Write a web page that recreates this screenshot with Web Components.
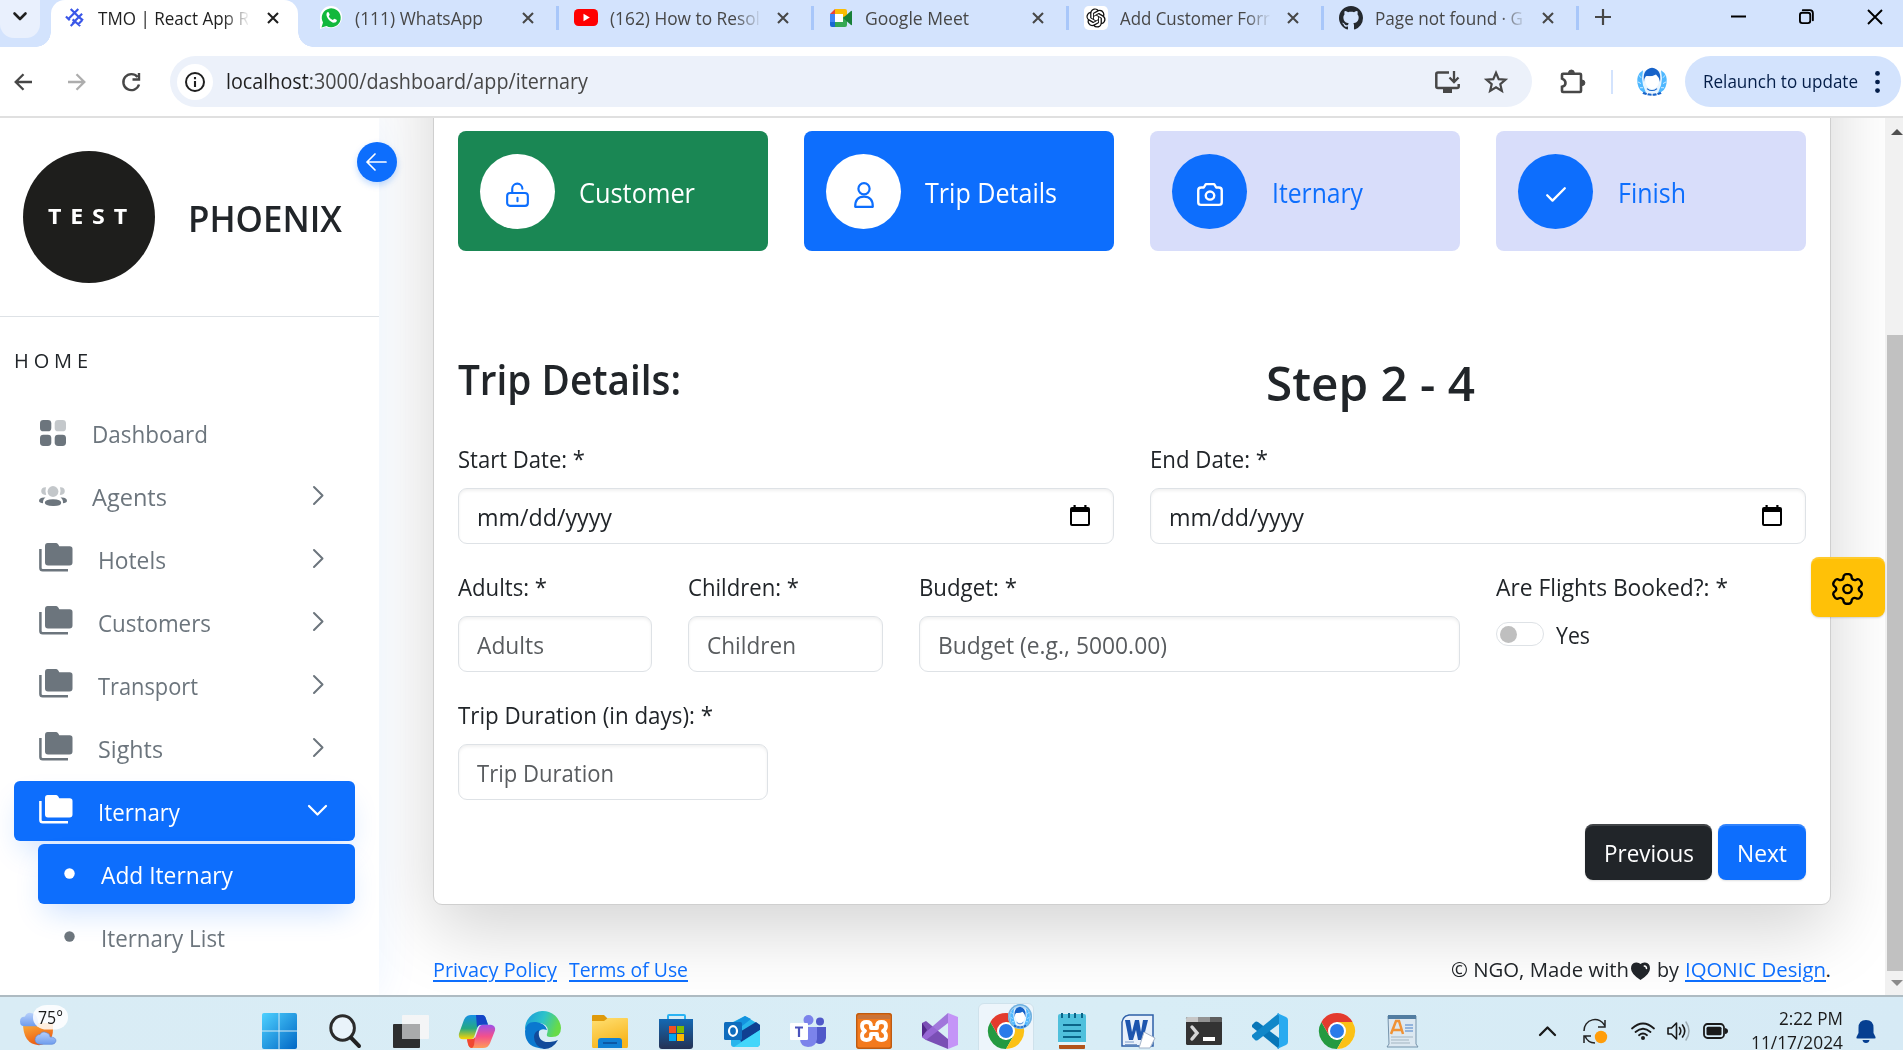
<!DOCTYPE html>
<html lang="en">
<head>
<meta charset="utf-8">
<title>TMO | React App</title>
<style>
html,body{margin:0;padding:0;width:1903px;height:1050px;overflow:hidden;background:#fff}
body{font-family:"Open Sans","Noto Sans",sans-serif;color:#212529}
</style>
</head>
<body>
<desktop-screen></desktop-screen>
<script>
const define=(name,html,after)=>customElements.define(name,class extends HTMLElement{
  connectedCallback(){
    if(this.shadowRoot)return;
    const t=document.createElement('template');
    t.innerHTML=typeof html==='function'?html(this):html;
    this.attachShadow({mode:'open'}).append(t.content.cloneNode(true));
    if(after)after(this,this.shadowRoot);
  }
});

/* Text run that is condensed or stretched to the width given in "w". */
define('fit-text',`<style>:host{display:block;white-space:pre;flex:none}span{display:inline-block;transform-origin:0 50%;white-space:pre}</style><span><slot></slot></span>`,(el,r)=>{
  const w=+el.getAttribute('w');if(!w)return;
  const s=r.querySelector('span');const n=s.getBoundingClientRect().width;
  el.style.width=w+'px';
  if(n)s.style.transform=`scaleX(${w/n})`;
});

const chromeLogo=`<circle cx="18" cy="18" r="18" fill="#fff"/><path d="M2.400 9 10.200 22.500 18 27l7.800-4.500L18 36A18 18 0 0 1 2.400 9z" fill="#249a41"/><path d="M25.800 22.500 18 36A18 18 0 0 0 33.600 9H18z" fill="#fbc116"/><path d="M18 9h15.600A18 18 0 0 0 2.400 9l7.800 13.500z" fill="#e33b2e"/><circle cx="18" cy="18" r="9" fill="#fff"/><circle cx="18" cy="18" r="7" fill="#2a7bea"/>`;
const face=`<circle cx="15" cy="17" r="14.500" fill="#e9f6ff"/><path d="M6 4Q-1 9 .5 20T9 31L6 22 5 14zM24 4q7 5 5.500 16T21 31l3-9 1-8z" fill="#4fb8ff"/><path d="M7 18Q5 3 15 1q10 2 8 17-1-6-4-9-5 3-10 2-2 3-2 7z" fill="#1763c9"/><path d="M8 14q1-2 2-3 6 1 9-1 3 3 3 6 0 9-7 11-7-2-7-13z" fill="#fff"/><path d="M10 26q5 5 10 0" stroke="#1763c9" stroke-width="1.200" fill="none"/><path d="M6 31q9 5 18 0" stroke="#1763c9" stroke-width="2.600" stroke-dasharray="4 1" fill="none"/><path d="M2 10l2 3M1 18l3 2M3 25l3 0M28 10l-2 3M29 18l-3 2M27 25h-3" stroke="#fff" stroke-width=".8"/>`;
const S='fill="none" stroke="currentColor" stroke-linecap="round" stroke-linejoin="round"';
const icons={
 down:['0 0 14 9',`<path d="M1.500 1.500 7 7l5.500-5.500" ${S} stroke-width="2.600" stroke-linecap="square"/>`],
 x:['0 0 12 12',`<path d="M1 1l10 10M11 1 1 11" fill="none" stroke="currentColor" stroke-width="2.100"/>`],
 plus:['0 0 16 16',`<path d="M8 0v16M0 8h16" stroke="currentColor" stroke-width="2.200"/>`],
 min:['0 0 15 15',`<path d="M0 7.500h15" stroke="#000" stroke-width="2"/>`],
 restore:['0 0 16 16',`<rect x="1" y="4" width="11" height="11" rx="2.500" ${S} stroke-width="2"/><path d="M4 1.200h7.500q3.300 0 3.300 3.300V12" ${S} stroke-width="2"/>`],
 close:['0 0 16 16',`<path d="M1 1l14 14M15 1 1 15" stroke="#000" stroke-width="1.900"/>`],
 tmo:['0 0 20 20',`<g stroke="#3a57e8" stroke-width="2.300" fill="none"><path d="M6 1l8 8M14 1 3 12M8 12l8 7M18 6 8 16M1 9l4 4M14 9l5 4M6 19l4-4M14 17l4-4"/></g>`],
 wa:['0 0 22 22',`<path d="M0 22V10A11 11 0 1 1 11 21Q8 21 5.500 20z" fill="#fff"/><path d="M1.500 20.500 3 15.500A9.500 9.500 0 1 1 6.500 19z" fill="#12b83c"/><path d="M7 5.500c1-1 1.500-.7 2 .5l.7 1.500c.2.600-.9 1.500-.9 1.800.6 1.600 2.300 3 4 3.600.5 0 1.200-1.300 1.700-1.200l2 1c1 .5-.1 2.700-1.800 2.900C11 16.500 4.500 9.500 7 5.500z" fill="#fff"/>`],
 yt:['0 0 24 17',`<rect width="24" height="17" rx="4.500" fill="#f00"/><path d="M9.500 4.800v7.400l6.300-3.700z" fill="#fff"/>`],
 meet:['0 0 22 18',`<path d="M0 5 5 0v5z" fill="#ea4335"/><path d="M5 0h10q2 0 2 2v6l-4 3V5H5z" fill="#fbbc04"/><path d="M0 5h5v8H0z" fill="#4285f4"/><path d="M0 13h5v5H2q-2 0-2-2z" fill="#1967d2"/><path d="M5 13h8V8l4-1v9q0 2-2 2H5z" fill="#34a853"/><path d="m13 9 8-7q1-.5 1 .5v13q0 1-1 .5z" fill="#188038"/><path d="M5 5h8v8H5z" fill="#fff"/>`],
 gpt:['-3 -3 30 30',`<rect x="-3" y="-3" width="30" height="30" rx="6" fill="#fff"/><path d="M22.2819 9.8211a5.9847 5.9847 0 0 0-.5157-4.9108 6.0462 6.0462 0 0 0-6.5098-2.9A6.0651 6.0651 0 0 0 4.9807 4.1818a5.9847 5.9847 0 0 0-3.9977 2.9 6.0462 6.0462 0 0 0 .7427 7.0966 5.98 5.98 0 0 0 .511 4.9107 6.051 6.051 0 0 0 6.5146 2.9001A5.9847 5.9847 0 0 0 13.2599 24a6.0557 6.0557 0 0 0 5.7718-4.2058 5.9894 5.9894 0 0 0 3.9977-2.9001 6.0557 6.0557 0 0 0-.7475-7.0729zm-9.022 12.6081a4.4755 4.4755 0 0 1-2.8764-1.0408l.1419-.0804 4.7783-2.7582a.7948.7948 0 0 0 .3927-.6813v-6.7369l2.02 1.1686a.071.071 0 0 1 .038.052v5.5826a4.504 4.504 0 0 1-4.4945 4.4944zm-9.6607-4.1254a4.4708 4.4708 0 0 1-.5346-3.0137l.142.0852 4.783 2.7582a.7712.7712 0 0 0 .7806 0l5.8428-3.3685v2.3324a.0804.0804 0 0 1-.0332.0615L9.74 19.9502a4.4992 4.4992 0 0 1-6.1408-1.6464zM2.3408 7.8956a4.485 4.485 0 0 1 2.3655-1.9728V11.6a.7664.7664 0 0 0 .3879.6765l5.8144 3.3543-2.0201 1.1685a.0757.0757 0 0 1-.071 0l-4.8303-2.7865A4.504 4.504 0 0 1 2.3408 7.872zm16.5963 3.8558L13.1038 8.364 15.1192 7.2a.0757.0757 0 0 1 .071 0l4.8303 2.7913a4.4944 4.4944 0 0 1-.6765 8.1042v-5.6772a.79.79 0 0 0-.407-.667zm2.0107-3.0231l-.142-.0852-4.7735-2.7818a.7759.7759 0 0 0-.7854 0L9.409 9.2297V6.8974a.0662.0662 0 0 1 .0284-.0615l4.8303-2.7866a4.4992 4.4992 0 0 1 6.6802 4.66zM8.3065 12.863l-2.02-1.1638a.0804.0804 0 0 1-.038-.0567V6.0742a4.4992 4.4992 0 0 1 7.3757-3.4537l-.142.0805L8.704 5.459a.7948.7948 0 0 0-.3927.6813zm1.0976-2.3654l2.602-1.4998 2.6069 1.4998v2.9994l-2.5974 1.4997-2.6067-1.4997Z" fill="#111"/>`],
 gh:['0 0 16 16',`<path fill="#24292f" d="M8 0C3.580 0 0 3.580 0 8c0 3.540 2.290 6.530 5.470 7.590.4.070.55-.17.55-.38 0-.19-.01-.82-.01-1.490-2.010.37-2.530-.49-2.690-.94-.09-.23-.48-.94-.82-1.130-.28-.15-.68-.52-.01-.53.63-.01 1.080.58 1.230.82.72 1.210 1.870.87 2.330.66.07-.52.28-.87.51-1.070-1.780-.2-3.640-.89-3.640-3.950 0-.87.31-1.590.82-2.150-.08-.2-.36-1.020.08-2.120 0 0 .67-.21 2.200.82.64-.18 1.320-.27 2-.27s1.360.09 2 .27c1.530-1.040 2.200-.82 2.200-.82.44 1.100.16 1.920.08 2.120.51.56.82 1.270.82 2.150 0 3.070-1.870 3.750-3.650 3.950.29.25.54.73.54 1.480 0 1.070-.01 1.930-.01 2.200 0 .21.15.46.55.38A8.013 8.013 0 0 0 16 8c0-4.420-3.580-8-8-8z"/>`],
 back:['0 0 18 18',`<path d="M9.500 1.200 1.700 9l7.800 7.800M2 9h16" fill="none" stroke="currentColor" stroke-width="2.300"/>`],
 fwd:['0 0 18 18',`<path d="m8.500 1.200 7.800 7.800-7.800 7.800M16 9H0" fill="none" stroke="currentColor" stroke-width="2.300"/>`],
 reload:['0 0 20 20',`<path d="M16.500 5A8 8 0 1 0 18 12.500M18 1v6.500h-6.500" fill="none" stroke="currentColor" stroke-width="2.400"/>`],
 info:['0 0 20 20',`<circle cx="10" cy="10" r="9" fill="none" stroke="currentColor" stroke-width="2"/><path d="M10 9v6M10 5v2.200" stroke="currentColor" stroke-width="2.100"/>`],
 install:['0 0 25 22',`<path d="M14 1.500H3Q1.300 1.500 1.300 3v12.500Q1.300 17 3 17h19q1.700 0 1.700-1.500V13" fill="none" stroke="currentColor" stroke-width="2.500"/><path d="M8 17h9v5H8z" fill="currentColor"/><path d="M19 0v10M14.500 6.500 19 11l4.500-4.500" fill="none" stroke="currentColor" stroke-width="2.300"/>`],
 star:['0 0 24 24',`<path d="m12 2.800 2.700 6.300 6.800.6-5.200 4.500 1.600 6.700L12 17.300l-5.900 3.600 1.600-6.700-5.200-4.500 6.800-.6z" fill="none" stroke="currentColor" stroke-width="2.200"/>`],
 ext:['0 0 25 27',`<path d="M3 6h17q1 0 1 1v17q0 1-1 1H3q-1 0-1-1v-4.500q3.500-1 3.500-4T2 11V7q0-1 1-1z" fill="none" stroke="currentColor" stroke-width="2.600"/><path d="M8.500 5a2.900 2.900 0 0 1 5.800 0zM22 12.500a2.900 2.900 0 0 1 0 5.800z" fill="currentColor" stroke="currentColor"/>`],
 face:['0 0 30 35',face],
 dots:['0 0 5 23',`<circle cx="2.500" cy="2.500" r="2.400"/><circle cx="2.500" cy="11.500" r="2.400"/><circle cx="2.500" cy="20.500" r="2.400"/>`],
 arrow:['0 0 22 18',`<path d="M10 1 2 9l8 8M2 9h19" ${S} stroke-width="1.700"/>`],
 dash:['0 0 26 26',`<rect width="11.300" height="11.300" rx="3.400"/><rect x="14.700" width="11.300" height="11.300" rx="3.400" opacity=".4"/><rect y="14.700" width="11.300" height="11.300" rx="3.400"/><rect x="14.700" y="14.700" width="11.300" height="11.300" rx="3.400"/>`],
 people:['0 0 28 20',`<g opacity=".4"><circle cx="14" cy="5.500" r="5.400"/><path d="M7 1.200Q2.200 1 2.200 5.200 2.500 9 7.200 9 5.800 5 7 1.200zM21 1.200q4.800-.2 4.800 4Q25.500 9 20.800 9q1.400-4 .2-7.800z"/></g><path d="M14 13.200q8.200 0 8.200 3.500T14 20t-8.200-3.300 8.200-3.500zM6.500 11.500Q0 11 0 15q.5 2 4 2.200-.2-4 2.500-5.700zM21.500 11.500Q28 11 28 15q-.5 2-4 2.200.2-4-2.500-5.700z"/>`],
 folder:['0 0 34 29',`<path d="M8.700 0h8.600q1.200 0 2 1.500l1 1.700h10.400Q33.500 3.200 33.500 6v13.500q0 3-3 3H9q-3 0-3-3V3q0-3 2.700-3z"/><path d="M1.400 6v19q0 2.300 2.300 2.300H29" fill="none" stroke="currentColor" stroke-width="2.500"/>`],
 right:['0 0 11 19',`<path d="m1 1 8.500 8.500L1 18" ${S} stroke-width="2"/>`],
 downW:['0 0 19 11',`<path d="m1 1 8.500 8.500L18 1" ${S} stroke-width="2.200"/>`],
 dot:['0 0 11 11',`<circle cx="5.500" cy="5.500" r="5.200"/>`],
 lock:['0 0 24 26',`<rect x="1.200" y="11.500" width="21.600" height="13.300" rx="3" ${S} stroke-width="2.200"/><path d="M6.500 11.500V7a5.300 5.300 0 0 1 10.600 0M12 16.500v3.500" ${S} stroke-width="2.200"/>`],
 user:['0 0 20 26',`<circle cx="10" cy="6.800" r="5.600" ${S} stroke-width="2.200"/><path d="M1.200 24.800Q1 14.700 10 14.700t8.800 10.100z" ${S} stroke-width="2.200"/>`],
 cam:['0 0 25 23',`<path d="M8.500 1.200h8l2 3.300H21q2.800 0 2.800 2.800v11.900q0 2.700-2.800 2.700H4q-2.800 0-2.800-2.700V7.300Q1.200 4.500 4 4.500h2.500z" ${S} stroke-width="2.300"/><circle cx="12.500" cy="12.600" r="4.100" ${S} stroke-width="2.300"/>`],
 check:['0 0 20 15',`<path d="m1.200 8.300 5.300 5.300L18.800 1.200" ${S} stroke-width="2.300"/>`],
 cal:['0 0 20 21',`<path d="M3.500 0h2.200v2h8.600V0h2.200v2H18q2 0 2 2v15q0 2-2 2H2q-2 0-2-2V4q0-2 2-2h1.500zM2 7v12h16V7z" fill="#000" fill-rule="evenodd"/>`],
 gear:['2.500 1.500 19.300 20.800',`<path d="M20.8064 7.62361L20.184 6.54352C19.6574 5.6296 18.4905 5.31432 17.5753 5.83872C17.1397 6.09534 16.6198 6.16815 16.1305 6.04109C15.6411 5.91402 15.2224 5.59752 14.9666 5.16137C14.8021 4.88415 14.7137 4.56839 14.7103 4.24604C14.7251 3.72922 14.5302 3.2284 14.1698 2.85767C13.8094 2.48694 13.3143 2.27786 12.7973 2.27808H11.5433C11.0367 2.27807 10.5511 2.47991 10.1938 2.83895C9.83644 3.19798 9.63693 3.68459 9.63937 4.19112C9.62435 5.23693 8.77224 6.07681 7.72632 6.0767C7.40397 6.07336 7.08821 5.98494 6.81099 5.82041C5.89582 5.29601 4.72887 5.61129 4.20229 6.52522L3.5341 7.62361C3.00817 8.53639 3.31916 9.70261 4.22975 10.2323C4.82166 10.574 5.18629 11.2056 5.18629 11.8891C5.18629 12.5725 4.82166 13.2041 4.22975 13.5458C3.32031 14.0719 3.00898 15.2353 3.5341 16.1454L4.16568 17.2346C4.4124 17.6798 4.82636 18.0083 5.31595 18.1474C5.80554 18.2866 6.3304 18.2249 6.77438 17.976C7.21084 17.7213 7.73094 17.6516 8.2191 17.7822C8.70725 17.9128 9.12299 18.233 9.37392 18.6717C9.53845 18.9489 9.62686 19.2646 9.63021 19.587C9.63021 20.6435 10.4867 21.5 11.5433 21.5H12.7973C13.8502 21.5001 14.7053 20.6491 14.7103 19.5962C14.7079 19.088 14.9086 18.6 15.2679 18.2407C15.6272 17.8814 16.1152 17.6807 16.6233 17.6831C16.9449 17.6917 17.2594 17.7798 17.5387 17.9394C18.4515 18.4653 19.6177 18.1544 20.1474 17.2438L20.8064 16.1454C21.0615 15.7075 21.1315 15.186 21.001 14.6964C20.8704 14.2067 20.55 13.7894 20.1108 13.5367C19.6715 13.284 19.3511 12.8666 19.2206 12.3769C19.09 11.8873 19.16 11.3658 19.4151 10.928C19.581 10.6383 19.8211 10.3982 20.1108 10.2323C21.0159 9.70289 21.3262 8.54349 20.8064 7.63277V7.62361Z" ${S} stroke-width="1.500"/><circle cx="12.175" cy="11.889" r="2.636" ${S} stroke-width="1.500"/>`],
 heart:['0 0 19 18',`<path d="M9.500 18Q0 12 0 6.500 0 1 5 .5 8 .3 9.500 2 11 .3 14 .5q5 .5 5 6Q19 12 9.500 18z"/><path d="M13.300 4q2.200.2 2.200 2.600" stroke="#fff" stroke-width="1.500" fill="none" stroke-linecap="round"/>`],
 up3:['0 0 12 6',`<path d="M0 6h12L6 0z" fill="#505050"/>`],
 dn3:['0 0 12 6',`<path d="M0 0h12L6 6z" fill="#8a8a8a"/>`],
 weather:['0 0 48 50',`<defs><linearGradient id="a" y2="1" x2=".4"><stop stop-color="#fbb03b"/><stop offset="1" stop-color="#ec5c13"/></linearGradient><linearGradient id="b" y2="1" x2="0"><stop stop-color="#b7d0fb"/><stop offset="1" stop-color="#6e9ced"/></linearGradient></defs><path d="M3 22h30v8q0 17-14 19Q3 48 3 22z" fill="url(#a)"/><path d="M5 26q-5 0-5-6t5-6q2-6 7-4 7 1 6 16z" fill="url(#b)"/><rect x="13" width="35" height="30" rx="14" fill="#fff" opacity=".85"/><path d="M20 48q-5-1-5-6 1-6 5-6 2-5 7-2 3 1 3 5 6 0 6 5-1 4-4 4z" fill="url(#b)" stroke="#6089d8" stroke-width=".7"/>`],
 win:['0 0 36 36',`<defs><linearGradient id="a" x2="1" y2="1"><stop stop-color="#4fd1ff"/><stop offset="1" stop-color="#0067c5"/></linearGradient></defs><path d="M2 0h15v17.500H0V2q0-2 2-2zM18 0h16q2 0 2 2v15.500H18zM0 18.500h17V36H2q-2 0-2-2zM18 18.500h18V34q0 2-2 2H18z" fill="url(#a)"/>`],
 search:['0 0 33 34',`<circle cx="14" cy="14" r="12.200" fill="#e9f3fa" stroke="#2b2b2b" stroke-width="3"/><path d="m22.500 23.500 8.500 8.500" stroke="#222" stroke-width="4" stroke-linecap="round"/>`],
 task:['0 0 36 33',`<rect x="9" width="27" height="24" rx="1" fill="#f4f5f6"/><path d="M0 10q0-1 1-1h25q1 0 1 1v22q0 1-1 1H1q-1 0-1-1z" fill="#2d2e2f"/><path d="M9 9h18v15H9z" fill="#a9aaab"/>`],
 copilot:['0 0 36 34',`<defs><linearGradient id="a" x2="0" y2="1"><stop stop-color="#1691e6"/><stop offset=".55" stop-color="#25a982"/><stop offset="1" stop-color="#ffd500"/></linearGradient><linearGradient id="b" x2="0" y2="1"><stop stop-color="#9c50ea"/><stop offset=".5" stop-color="#f4508b"/><stop offset="1" stop-color="#ff9b58"/></linearGradient></defs><path d="M12 0h11q3 0 4 4l2 6h-7q-3 0-4 4l-3 9q-1 2-4 2H4q-5 0-4-6L5 5q2-5 7-5z" fill="url(#a)"/><path d="M17 0h6q3 0 4 4l2 6h-7q-3 0-4 3z" fill="#1444c7"/><path d="M24 34H13q-3 0-4-4l-1-5h5q3 0 4-4l3-8q1-3 4-3h8q5 1 4 6l-5 13q-2 5-7 5z" fill="url(#b)"/><path d="M13 34q-3 0-4-4l-1-5h4q3 0 4-2l-1 8q-1 3-2 3z" fill="#f0482f"/>`],
 edge:['0 0 36 36',`<defs><linearGradient id="a" x2="1" y2=".3"><stop stop-color="#1a98dd"/><stop offset=".55" stop-color="#2dc3c9"/><stop offset="1" stop-color="#68db47"/></linearGradient></defs><path d="M0 17A18 18 0 0 1 36 15q0 10-11 9-4 0-3-3 3-9-7-11Q3 9 0 17z" fill="url(#a)"/><path d="M0 18Q1 8 11 9q9 1 11 8-9-3-9 6 0 12 9 12-4 1-8 0Q0 33 0 18z" fill="#0a78cf"/><path d="M14 17q-2 13 11 12 5-.5 8-2-5 9-14 9-10-3-10-12 0-5 5-7z" fill="#114a9a"/>`],
 explorer:['0 0 36 33',`<defs><linearGradient id="a" x2=".4" y2="1"><stop stop-color="#ffe073"/><stop offset="1" stop-color="#f8b51d"/></linearGradient></defs><path d="M0 1q0-1 1-1h11l4 4-4 6H0z" fill="#df9a0b"/><path d="M0 6h12l4-3h19q1 0 1 1v27q0 2-1 2H1q-1 0-1-2z" fill="url(#a)"/><path d="M6 33V26q0-3 3-3h18q3 0 3 3v7z" fill="#1180d4"/><path d="M11 28h14" stroke="#0b58a5" stroke-width="2"/>`],
 store:['0 0 34 35',`<defs><linearGradient id="a" x2="0" y2="1"><stop stop-color="#1469b4"/><stop offset="1" stop-color="#253254"/></linearGradient></defs><path d="M9 6V2q0-1 1-1h15q1 0 1 1v4" fill="none" stroke="#2bb3f3" stroke-width="2"/><path d="M0 5h34v27q0 3-3 3H3q-3 0-3-3z" fill="url(#a)"/><path d="M10 12h7v7h-7z" fill="#f25022"/><path d="M18 12h7v7h-7z" fill="#7fba00"/><path d="M10 20h7v7h-7z" fill="#00a4ef"/><path d="M18 20h7v7h-7z" fill="#ffb900"/>`],
 outlook:['0 0 36 31',`<path d="M7 7 21 0l15 9v18q0 4-4 4H10q-3 0-3-3z" fill="#28b5ec"/><path d="M7 8 21 0l6 3L8 18z" fill="#1493df"/><path d="m14 17 18-11 4 3v5L17 26z" fill="#103f91"/><path d="M10 31 36 14v13q0 4-4 4z" fill="#43d6fa"/><rect y="6" width="18" height="18" rx="1.500" fill="#0f6cbd"/><ellipse cx="9" cy="15" rx="4" ry="4.800" fill="none" stroke="#fff" stroke-width="2.200"/>`],
 teams:['0 0 36 33',`<circle cx="30" cy="6.500" r="4" fill="#5059c9"/><circle cx="18.500" cy="5" r="5" fill="#7b83eb"/><path d="M24 12h12v11q-1 6-7 6-5-1-5-7z" fill="#5059c9"/><path d="M10 12h17v12q-1 8-9 8-8-1-8-8z" fill="#7b83eb"/><rect y="8" width="18" height="17" rx="1" fill="#fff"/><path d="M5 12.500h8M9 12.500V22" stroke="#4b53bc" stroke-width="2.200"/>`],
 xampp:['0 0 36 36',`<rect width="36" height="36" rx="3" fill="#f37a1d"/><rect x=".7" y=".7" width="34.600" height="34.600" rx="2.500" fill="none" stroke="#bd5b12" stroke-width="1.400"/><path d="M2 2h32v4H2z" fill="#c9743a"/><path d="M15 15V13q0-4-4.500-4T6 13q0 3.500 3 5-3 1.500-3 5 0 4 4.500 4T15 23v-2h6v2q0 4 4.500 4t4.500-4q0-3.500-3-5 3-1.500 3-5 0-4-4.500-4T21 13v2z" fill="none" stroke="#fff" stroke-width="3.800" stroke-linejoin="round"/>`],
 vs:['0 0 36 36',`<path d="m0 10 4-2 22 18v10L4 27l-4-3z" fill="#7a4fb5"/><path d="M0 24V10l5 7z" fill="#52288a"/><path d="m0 24 4 3L26 10V0L4 19z" fill="#9a69d8" opacity=".9"/><path d="m26 0 10 4v28l-10 4z" fill="#c494f7"/>`],
 chrome:['0 0 36 36',chromeLogo],
 notepad:['0 0 28 36',`<path d="M1 31h26v4q0 1-1 1H2q-1 0-1-1z" fill="#b3541a"/><rect y="1" width="28" height="30" rx="2" fill="#4fc0dc"/><path d="M0 29h28v3H0z" fill="#e6f4f8"/><path d="M4 0v5M11 0v5M17 0v5M24 0v5M5 12h18M5 18h18M5 24h18" stroke="#0b6588" stroke-width="2"/>`],
 word:['0 0 34 34',`<path d="M8 1h24v31H1V8q1-6 7-7z" fill="#e9f1fb" stroke="#2e5fa8" stroke-width="1.500"/><path d="M4 6h5l2 12 3-12h4l2 12 2-12h5l-5 20h-5l-2-10-3 10H8z" fill="#1d55ae"/><path d="m23 18 11 6-5 10H18z" fill="#fff" stroke="#a3b3c9"/><path d="M4 28h9M4 30.500h12" stroke="#7c9cc9"/>`],
 term:['0 0 36 28',`<rect width="36" height="28" rx="1.500" fill="#333"/><path d="M0 5V1.500Q0 0 1.500 0H12v5z" fill="#c7c7c7"/><path d="M12 0h12v5H12z" fill="#939393"/><path d="M24 0h10q2 0 2 2v3H24z" fill="#5d5d5d"/><path d="m6 10 5 6-5 6" fill="none" stroke="#d7d7d7" stroke-width="3.500" stroke-linecap="round"/><path d="M17 22h12" stroke="#fff" stroke-width="4"/>`],
 code:['0 0 36 36',`<path d="m0 12 3-3q1-1 3 0l21 16v11L0 14z" fill="#0876b8"/><path d="m0 24 3 3q1 1 3 0L27 11V0L0 22z" fill="#1187c9"/><path d="m25 0 9 4q2 1 2 3v22q0 2-2 3l-9 4 2-3V3z" fill="#29aaf0"/>`],
 wordpad:['0 0 31 35',`<path d="M1 2h28v28l2 3H0l2-3z" fill="#dce8f1" stroke="#7593ab"/><path d="M1 1h28v4H1z" fill="#527da1"/><path d="m4 20 5-13h3l4 13M6 16h8" fill="none" stroke="#f09235" stroke-width="2.500"/><path d="M18 11h8M18 14h8M18 17h8" stroke="#4a80c7"/><path d="M4 23h22M4 26h18M4 29h19" stroke="#a3b5c1"/>`],
 upc:['0 0 17 10',`<path d="m1 9 7.500-7.500L16 9" ${S} stroke-width="2.300"/>`],
 sync:['0 0 25 25',`<path d="M1 12A11 11 0 0 1 22 7M22 1v7h-7M12 24A11 11 0 0 1 2 17M1 24v-7h7" fill="none" stroke="#222" stroke-width="1.500"/><circle cx="18" cy="18" r="6.200" fill="#ff9d0a"/>`],
 wifi:['0 0 24 18',`<path d="M1 6.500q11-10 22 0M4.500 10q7.500-6.500 15 0M8 13.200q4-3.500 8 0" ${S} stroke-width="1.800"/><circle cx="12" cy="16" r="2"/>`],
 vol:['0 0 24 20',`<path d="M1 7h3.500L9.500 2v16l-5-5H1z" ${S} stroke-width="1.600"/><path d="M12.500 6.500q2.500 3.500 0 7M15.500 4q4.500 6 0 12" ${S} stroke-width="1.600"/><path d="M19 1q6 9 0 18" ${S} stroke-width="1.500" opacity=".3"/>`],
 batt:['0 0 25 16',`<rect x="1" y="1" width="20" height="14" rx="3.500" ${S} stroke-width="1.800"/><rect x="3.500" y="3.700" width="15" height="8.600" rx="1.500"/><path d="M22 5q3 .5 3 3t-3 3z"/>`],
 bell:['0 0 20 23',`<path d="M10 0q7.500 0 7.500 8v5l2 4q.6 1.500-1 1.500h-17q-1.600 0-1-1.500l2-4V8Q2.500 0 10 0zM6.500 20h7q-.5 3-3.500 3t-3.500-3z" fill="#063f91"/>`]
};
define('ui-icon',el=>{const i=icons[el.getAttribute('name')];return `<style>:host{display:block;flex:none;width:${el.getAttribute('w')}px;height:${el.getAttribute('h')}px}svg{display:block;width:100%;height:100%;overflow:visible}</style><svg viewBox="${i[0]}" preserveAspectRatio="none" fill="currentColor">${i[1]}</svg>`});

/* Browser frame */
define('browser-tab',el=>`<style>
:host{display:flex;align-items:center;flex:none;width:255px;height:47px;position:relative;color:#474747;font-size:17.5px}
:host([active]){color:#1f1f1f}
.shape{position:absolute;left:4px;right:4px;top:0;bottom:0;background:#fff;border-radius:14px 14px 0 0}
.shape:before,.shape:after{content:"";position:absolute;bottom:0;width:15px;height:15px}
.shape:before{left:-15px;background:radial-gradient(circle at 0 0,transparent 14.500px,#fff 15px)}
.shape:after{right:-15px;background:radial-gradient(circle at 100% 0,transparent 14.500px,#fff 15px)}
.ic,.t,.c,.sep{flex:none}
.ic{width:24px;margin-left:17px;display:flex;justify-content:center;position:relative;padding-bottom:12px}
:host([active]) .ic{margin-left:15px}
.t{margin-left:12px;width:150px;overflow:hidden;position:relative;line-height:37px;height:47px;-webkit-mask:linear-gradient(90deg,#000 125px,transparent 152px)}
.t.s{-webkit-mask:none}
.c{width:46px;display:flex;justify-content:center;position:relative;padding-bottom:12px}
:host([active]) .c{margin-left:2px}
.sep{width:3px;height:24px;background:#a8c7fa;margin:0 0 11px 5px}
</style>${el.hasAttribute('active')?'<div class="shape"></div>':''}
<div class="ic"><ui-icon name="${el.getAttribute('icon')}" w="${el.getAttribute('iw')}" h="${el.getAttribute('ih')}"></ui-icon></div>
<div class="t ${el.hasAttribute('short')?'s':''}"><fit-text w="${el.getAttribute('w')}">${el.getAttribute('label')}</fit-text></div>
<div class="c"><ui-icon name="x" w="12" h="12"></ui-icon></div>${el.hasAttribute('sep')?'<div class="sep"></div>':''}`);

define('tab-strip',`<style>
:host{display:flex;height:47px;background:#d3e3fd;flex:none}
.s{width:40px;height:38px;background:#e9f0fd;border-radius:0 0 14px 14px;display:flex;justify-content:center;padding-top:12px;box-sizing:border-box;margin-right:7px;color:#1f1f1f}
.p{display:flex;align-items:flex-start;padding:9px 0 0 18px;color:#474747}
.w{margin-left:auto;display:flex;gap:53px;padding:9px 20px 0 0;color:#000}
</style>
<div class="s"><ui-icon name="down" w="14" h="9"></ui-icon></div>
<browser-tab active icon="tmo" iw="19" ih="19" label="TMO | React App R" w="151"></browser-tab>
<browser-tab icon="wa" iw="22" ih="22" label="(111) WhatsApp" w="128" short sep></browser-tab>
<browser-tab icon="yt" iw="24" ih="17" label="(162) How to Resol" w="150" sep></browser-tab>
<browser-tab icon="meet" iw="22" ih="18" label="Google Meet" w="104" short sep></browser-tab>
<browser-tab icon="gpt" iw="24" ih="24" label="Add Customer Forr" w="150" sep></browser-tab>
<browser-tab icon="gh" iw="24" ih="24" label="Page not found · G" w="148" sep></browser-tab>
<div class="p"><ui-icon name="plus" w="16" h="16"></ui-icon></div>
<div class="w"><ui-icon name="min" w="15" h="15"></ui-icon><ui-icon name="restore" w="15" h="15"></ui-icon><ui-icon name="close" w="16" h="16"></ui-icon></div>`);

define('tool-bar',`<style>
:host{display:flex;align-items:center;height:69px;background:#fff;border-bottom:2px solid #e0e0e0;flex:none;color:#474747;box-sizing:content-box}
.n,.o,.e,.v,.u{flex:none}
.n{display:flex;gap:36px;padding-left:14px;width:156px;align-items:center}
.n ui-icon:last-child{margin-left:-1px}
.o{width:1362px;height:51px;border-radius:26px;background:#ecf1fa;display:flex;align-items:center;font-size:21px;box-sizing:border-box;padding-left:7px}
.o fit-text,.u fit-text{margin-top:-2px}
.i{width:36px;height:36px;border-radius:50%;background:#fff;display:grid;place-items:center;color:#1f1f1f;margin-right:13px}
b{font-weight:400;color:#1f1f1f}
.r{margin-left:auto;display:flex;gap:24px;align-items:center;padding-right:24px}
.e{width:79px;display:flex;justify-content:center;padding:0 0 2px 1px;box-sizing:border-box}
.v{width:2px;height:24px;background:#d3e3fd;margin-right:24px}
.u{width:216px;height:51px;border-radius:26px;background:#d3e3fd;margin-left:18px;display:flex;align-items:center;color:#041e49;font-size:18px;box-sizing:border-box;padding-left:18px;gap:17px}
</style>
<div class="n"><ui-icon name="back" w="18" h="18"></ui-icon><ui-icon name="fwd" w="18" h="18" style="color:#adadad"></ui-icon><ui-icon name="reload" w="20" h="20"></ui-icon></div>
<div class="o"><div class="i"><ui-icon name="info" w="20" h="20"></ui-icon></div><fit-text w="362"><b>localhost</b>:3000/dashboard/app/iternary</fit-text><div class="r"><ui-icon name="install" w="25" h="22"></ui-icon><ui-icon name="star" w="24" h="24"></ui-icon></div></div>
<div class="e"><ui-icon name="ext" w="25" h="26"></ui-icon></div><div class="v"></div>
<ui-icon name="face" w="30" h="29"></ui-icon>
<div class="u"><fit-text w="155">Relaunch to update</fit-text><ui-icon name="dots" w="5" h="22"></ui-icon></div>`);

/* Sidebar */
define('nav-item',el=>`<style>
:host{display:flex;align-items:center;height:60px;margin:0 24px 3px 14px;border-radius:6px;color:#6c757d;font-size:23.5px;box-sizing:border-box;padding:0 31px 0 25px}
:host([active]){background:#0d6efd;color:#fff;box-shadow:0 15px 30px -8px rgba(13,110,253,.22)}
:host([sub]){margin-left:38px;padding-left:26px}
.i{width:${el.hasAttribute('sub')?37:el.getAttribute('icon')=='folder'?59:el.getAttribute('icon')=='people'?53:52}px}
:host([icon=folder]) .i{padding-bottom:3px}
:host([sub]) .i{padding-bottom:2px}
.c{margin-left:auto;padding-bottom:1px}
:host([active]) .c{margin-right:-3px}
fit-text{margin-top:2px}
</style><div class="i"><ui-icon name="${el.getAttribute('icon')}" w="${el.getAttribute('iw')}" h="${el.getAttribute('ih')}"></ui-icon></div><fit-text w="${el.getAttribute('w')}">${el.getAttribute('label')}</fit-text>${el.hasAttribute('arrow')?`<div class="c">${el.getAttribute('arrow')=='d'?'<ui-icon name="downW" w="19" h="11"></ui-icon>':'<ui-icon name="right" w="11" h="19"></ui-icon>'}</div>`:''}`);

define('side-bar',`<style>
:host{display:block;width:379px;background:#fff;position:relative;z-index:2;flex:none;box-shadow:0 0 40px rgba(13,110,253,.08);clip-path:inset(0 -60px 0 0)}
.h{height:198px;border-bottom:1px solid #dee2e6;display:flex;align-items:center;padding-left:23px}
.l{width:132px;height:132px;border-radius:50%;background:#1e1e1c;color:#fff;display:grid;place-items:center;font:700 21px/30px "Open Sans",sans-serif;letter-spacing:8px;margin-right:33px;box-sizing:border-box;padding:0 0 2px 6px}
.n{font-size:35.5px;font-weight:600;line-height:50px;margin-top:1px}
.b{position:absolute;left:357px;top:24px;width:40px;height:40px;border-radius:50%;background:#0d6efd;color:#fff;display:grid;place-items:center;box-shadow:0 3px 6px rgba(13,110,253,.25);box-sizing:border-box;padding-right:2px}
.t{font-size:20.5px;line-height:30px;padding:28px 0 28px 14px;letter-spacing:5px}
</style>
<div class="h"><div class="l"><fit-text w="88">TEST</fit-text></div><fit-text class="n" w="154">PHOENIX</fit-text></div>
<div class="t"><fit-text w="79">HOME</fit-text></div>
<nav>
<nav-item icon="dash" iw="26" ih="26" label="Dashboard" w="116" style="padding-left:26px"></nav-item>
<nav-item icon="people" iw="28" ih="20" label="Agents" w="75" arrow="r"></nav-item>
<nav-item icon="folder" iw="34" ih="29" label="Hotels" w="68" arrow="r"></nav-item>
<nav-item icon="folder" iw="34" ih="29" label="Customers" w="113" arrow="r"></nav-item>
<nav-item icon="folder" iw="34" ih="29" label="Transport" w="100" arrow="r"></nav-item>
<nav-item icon="folder" iw="34" ih="29" label="Sights" w="65" arrow="r"></nav-item>
<nav-item active icon="folder" iw="34" ih="29" label="Iternary" w="82" arrow="d"></nav-item>
<nav-item active sub icon="dot" iw="11" ih="11" label="Add Iternary" w="132"></nav-item>
<nav-item sub icon="dot" iw="11" ih="11" label="Iternary List" w="124"></nav-item>
</nav>
<div class="b"><ui-icon name="arrow" w="22" h="18"></ui-icon></div>`);

/* Wizard */
define('wizard-step',el=>`<style>
:host{display:flex;align-items:center;height:120px;border-radius:8px;background:#d8ddfa;color:#0d6efd;font-size:26.5px;padding-left:22px;flex:1}
:host([kind=done]){background:#1a8754;color:#fff}
:host([kind=active]){background:#0d6efd;color:#fff}
.c{width:75px;height:75px;border-radius:50%;background:#0d6efd;color:#fff;display:grid;place-items:center;margin-right:25px;box-sizing:border-box;padding-top:7px}
:host([kind]) .c{background:#fff;color:#0d6efd;margin-right:24px}
fit-text{line-height:40px;margin-top:3px}
</style><div class="c"><ui-icon name="${el.getAttribute('icon')}" w="${el.getAttribute('iw')}" h="${el.getAttribute('ih')}"></ui-icon></div><fit-text w="${el.getAttribute('w')}">${el.getAttribute('label')}</fit-text>`);

define('form-field',el=>`<style>
:host{display:block;font-size:23.5px}
.l{line-height:36px;margin-bottom:11px}
.i{height:56px;box-sizing:border-box;border:1px solid #dee2e6;border-radius:9px;box-shadow:inset 0 2px 3px rgba(0,0,0,.06);display:flex;align-items:center;justify-content:space-between;padding:0 23px 0 18px;color:#595c5f}
.i fit-text{margin-top:2px}
.i ui-icon{margin-top:-1px}
:host([date]) .i{color:#212529}
</style><fit-text class="l" w="${el.getAttribute('lw')}">${el.getAttribute('label')}</fit-text><div class="i"><fit-text w="${el.getAttribute('w')}">${el.getAttribute('text')}</fit-text>${el.hasAttribute('date')?'<ui-icon name="cal" w="20" h="21"></ui-icon>':''}</div>`);

define('toggle-field',`<style>
:host{display:block;font-size:23.5px}
.l{line-height:36px;margin-bottom:11px}
.r{display:flex;align-items:center;gap:12px;height:38px;line-height:38px}
.s{width:48px;height:24px;box-sizing:border-box;border:1px solid #dee2e6;border-radius:12px;display:flex;align-items:center;padding-left:3px;margin-bottom:2px}
.s i{width:17px;height:17px;border-radius:50%;background:#bfbfbf}
</style><fit-text class="l" w="232">Are Flights Booked?: *</fit-text><div class="r"><div class="s"><i></i></div><fit-text w="34">Yes</fit-text></div>`);

define('ui-button',`<style>:host{display:flex;align-items:center;justify-content:center;height:56px;border-radius:8px;background:#0d6efd;color:#fff;font-size:23.5px;box-shadow:inset 0 2px 0 rgba(255,255,255,.15),0 1px 2px rgba(0,0,0,.12);box-sizing:border-box;padding-top:2px}:host([dark]){background:#212529}</style><slot></slot>`);

define('trip-card',`<style>
:host{display:block;width:1398px;box-sizing:border-box;margin-top:-203px;padding:215px 24px 24px;background:#fff;border:1px solid #cfcfcf;border-radius:9px;box-shadow:0 24px 72px rgba(0,0,0,.175);flex:none}
.steps{display:flex;gap:36px}
.head{display:grid;grid-template-columns:692px 1fr;margin-top:102px;height:59px;margin-bottom:29px;font-weight:600}
.a{font-size:41px;line-height:51px;margin-top:1px}.b{font-size:46.5px;line-height:59px;margin:1px 0 0 116px}
.row{display:grid;column-gap:36px;margin-bottom:25px}
.two{grid-template-columns:1fr 1fr}
.four{grid-template-columns:194px 195px 541px 310px}
.one{grid-template-columns:310px;margin-bottom:24px}
.btn{display:flex;justify-content:flex-end;gap:6px}
</style>
<div class="steps">
<wizard-step kind="done" icon="lock" iw="23" ih="25" label="Customer" w="116"></wizard-step>
<wizard-step kind="active" icon="user" iw="20" ih="26" label="Trip Details" w="132"></wizard-step>
<wizard-step icon="cam" iw="26" ih="23" label="Iternary" w="91"></wizard-step>
<wizard-step icon="check" iw="20" ih="15" label="Finish" w="68"></wizard-step>
</div>
<div class="head"><fit-text class="a" w="223">Trip Details:</fit-text><fit-text class="b" w="209">Step 2 - 4</fit-text></div>
<div class="row two"><form-field date label="Start Date: *" lw="127" text="mm/dd/yyyy" w="135"></form-field><form-field date label="End Date: *" lw="118" text="mm/dd/yyyy" w="135"></form-field></div>
<div class="row four"><form-field label="Adults: *" lw="89" text="Adults" w="67"></form-field><form-field label="Children: *" lw="111" text="Children" w="89"></form-field><form-field label="Budget: *" lw="98" text="Budget (e.g., 5000.00)" w="229"></form-field><toggle-field></toggle-field></div>
<div class="row one"><form-field label="Trip Duration (in days): *" lw="255" text="Trip Duration" w="137"></form-field></div>
<div class="btn"><ui-button dark style="width:127px"><fit-text w="90">Previous</fit-text></ui-button><ui-button style="width:88px"><fit-text w="50">Next</fit-text></ui-button></div>`);

define('page-footer',`<style>
:host{display:flex;width:1398px;height:40px;align-items:center;margin-top:44px;font-size:20.5px;line-height:30px}
a{color:#0d6efd;text-decoration:underline;text-underline-offset:3px;text-decoration-thickness:1.500px}
.r{margin-left:auto;display:flex;align-items:center}
</style><fit-text w="124"><a>Privacy Policy</a></fit-text><fit-text w="119" style="margin-left:12px"><a>Terms of Use</a></fit-text>
<div class="r"><fit-text w="178">© NGO, Made with</fit-text><ui-icon name="heart" w="19" h="18" style="margin:3px 7px 0 2px"></ui-icon><fit-text w="22">by</fit-text><fit-text w="141" style="margin-left:6px"><a>IQONIC Design</a></fit-text><span>.</span></div>`);

define('page-view',`<style>
:host{display:flex;height:877px;flex:none;position:relative;overflow:hidden;background:#fff}
main{flex:1;padding-left:54px;overflow:hidden;display:flex;flex-direction:column}
.bar{width:18px;background:#f1f1f1;display:flex;flex-direction:column;align-items:flex-end;box-sizing:border-box;padding-top:11px}
.th{width:16px;height:636px;background:#c1c1c1;margin:200px 0 9px}
.g{position:absolute;left:1811px;top:439px;width:74px;height:60px;border-radius:8px;background:#ffc107;display:grid;place-items:center;color:#000;box-shadow:inset 0 2px 0 rgba(255,255,255,.15),0 1px 2px rgba(0,0,0,.15);box-sizing:border-box;padding:3px 1px 0 0}
</style><side-bar></side-bar><main><trip-card></trip-card><page-footer></page-footer></main>
<div class="bar"><ui-icon name="up3" w="12" h="6"></ui-icon><div class="th"></div><ui-icon name="dn3" w="12" h="6"></ui-icon></div>
<div class="g"><ui-icon name="gear" w="31" h="32"></ui-icon></div>`);

/* Taskbar */
const apps=[['win',35,36],['search',32,34],['task',36,33],['copilot',36,33],['edge',36,36],['explorer',36,33],['store',34,35],['outlook',36,31],['teams',36,33],['xampp',36,36],['vs',36,36],['chrome',36,36],['notepad',28,36],['word',34,34],['term',36,28],['code',36,36],['chrome',36,36],['wordpad',31,35]];
define('task-bar',()=>`<style>
:host{display:flex;height:53px;border-top:2px solid #aebbc2;background:linear-gradient(90deg,#d9ecf5,#d8edf6 60%,#d6eaf5);flex:none;overflow:hidden;color:#1a1a1a}
.w{width:226px;padding:8px 0 0 20px;display:grid;box-sizing:border-box;margin-right:20px;flex:none}
.w>*{grid-area:1/1}
.w fit-text{font-size:17.5px;line-height:24px;margin:0 0 0 18px}
.a{width:66.100px;display:flex;align-items:center;justify-content:center;height:36px;padding-top:16px;position:relative;flex:none}
.on{position:absolute;left:5px;top:6px;width:56px;height:60px;border-radius:6px;background:#edf5fb;border:1px solid #cfe2ec;box-sizing:border-box}
.a ui-icon{position:relative}
.f{position:absolute;left:35px;top:7px;width:24px;height:25px;border-radius:50%;background:#b5daf5;box-shadow:inset 0 0 0 1.500px #6fb1e0;overflow:hidden;display:grid;place-items:center}
.t{display:flex;align-items:center;height:36px;padding-top:16px;flex:none;margin-left:88px}
.t div{display:flex;justify-content:center}
.d{font-size:17.5px;line-height:24px;width:103px;margin-top:9px;display:flex;flex-direction:column;align-items:flex-end;flex:none}
.b{margin:23px 0 0 13px}
</style>
<div class="w"><ui-icon name="weather" w="48" h="41"></ui-icon><fit-text w="25">75°</fit-text></div>
${apps.map((a,i)=>`<div class="a">${i==11?'<div class="on"></div>':''}<ui-icon name="${a[0]}" w="${a[1]}" h="${a[2]}"></ui-icon>${i==11?'<div class="f"><ui-icon name="face" w="20" h="22"></ui-icon></div>':''}</div>`).join('')}
<div class="t"><div style="width:48px"><ui-icon name="upc" w="17" h="10"></ui-icon></div><div style="width:48px"><ui-icon name="sync" w="25" h="25"></ui-icon></div><div style="width:47px"><ui-icon name="wifi" w="24" h="18"></ui-icon></div><div style="width:24px"><ui-icon name="vol" w="24" h="20"></ui-icon></div><div style="width:49px"><ui-icon name="batt" w="25" h="16"></ui-icon></div></div>
<div class="d"><fit-text w="64">2:22 PM</fit-text><fit-text w="92">11/17/2024</fit-text></div>
<div class="b"><ui-icon name="bell" w="20" h="23"></ui-icon></div>`);

define('desktop-screen',`<style>:host{display:flex;flex-direction:column;width:1903px;height:1050px;overflow:hidden}</style><tab-strip></tab-strip><tool-bar></tool-bar><page-view></page-view><task-bar></task-bar>`);
</script>
</body>
</html>
